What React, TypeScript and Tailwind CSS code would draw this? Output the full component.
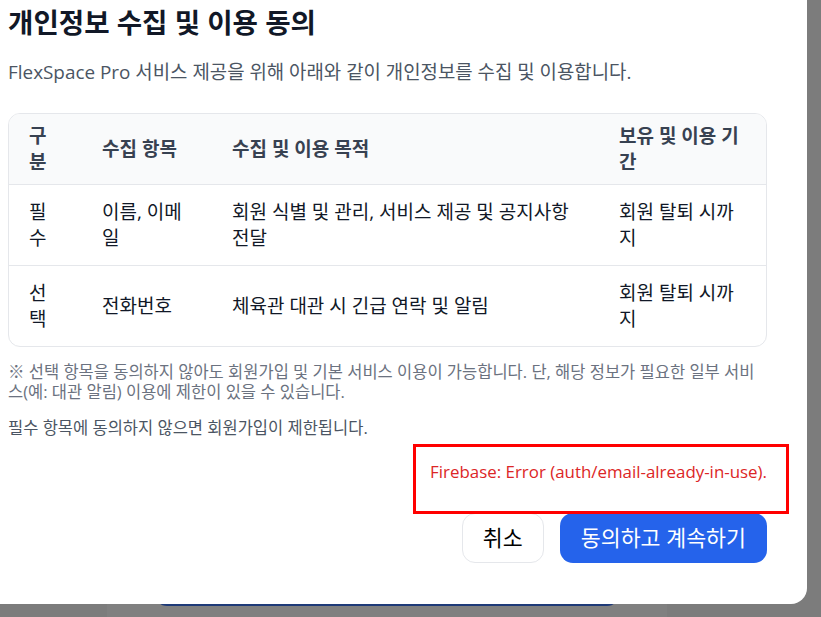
import React from "react";

const rows = [
  { kind: "필수", items: "이름, 이메일", purpose: "회원 식별 및 관리, 서비스 제공 및 공지사항 전달", period: "회원 탈퇴 시까지" },
  { kind: "선택", items: "전화번호", purpose: "체육관 대관 시 긴급 연락 및 알림", period: "회원 탈퇴 시까지" },
];

const ConsentTable = () => {
  return (
    <div className="mt-[28px] w-[759px] overflow-hidden rounded-xl border border-[#e5e7eb]">
      <table className="w-full table-fixed border-collapse text-left text-[19px] leading-[26px]">
        <colgroup>
          <col className="w-[73px]" />
          <col className="w-[130px]" />
          <col className="w-[387px]" />
          <col className="w-[167px]" />
        </colgroup>
        <thead>
          <tr className="border-b border-[#e5e7eb] bg-[#f9fafb] text-[#374151]">
            <th className="px-5 py-[9px] font-semibold">구분</th>
            <th className="px-5 py-[9px] font-semibold">수집 항목</th>
            <th className="px-5 py-[9px] font-semibold">수집 및 이용 목적</th>
            <th className="px-5 py-[9px] font-semibold">보유 및 이용 기간</th>
          </tr>
        </thead>
        <tbody className="text-[#111827]">
          {rows.map((r, i) => (
            <tr key={r.kind} className={i < rows.length - 1 ? "border-b border-[#e5e7eb]" : ""}>
              <td className="px-5 py-[14px]">{r.kind}</td>
              <td className="px-5 py-[14px]">{r.items}</td>
              <td className="px-5 py-[14px]">{r.purpose}</td>
              <td className="px-5 py-[14px]">{r.period}</td>
            </tr>
          ))}
        </tbody>
      </table>
    </div>
  );
};

const ConsentModal = () => {
  return (
    <div className="relative z-10 w-[807px] rounded-br-2xl bg-white pl-2 pr-10 pt-1 pb-[41px]">
      <h2 className="text-[27.6px] font-bold leading-[36px] text-[#111827]">개인정보 수집 및 이용 동의</h2>
      <p className="mt-[19px] text-[18.9px] leading-[26px] text-[#4b5563]">
        FlexSpace Pro 서비스 제공을 위해 아래와 같이 개인정보를 수집 및 이용합니다.
      </p>

      <ConsentTable />

      <p className="mt-[15px] w-[759px] text-[16.5px] leading-5 text-[#6b7280]">
        ※ 선택 항목을 동의하지 않아도 회원가입 및 기본 서비스 이용이 가능합니다. 단, 해당 정보가 필요한 일부 서비스(예: 대관 알림) 이용에 제한이 있을 수 있습니다.
      </p>
      <p className="mt-4 text-[16.5px] leading-5 text-[#4b5563]">필수 항목에 동의하지 않으면 회원가입이 제한됩니다.</p>

      <div className="relative mt-[23px] w-[759px] text-right text-[16.9px] leading-[22px] text-[#dc2626]">
        Firebase: Error (auth/email-already-in-use).
        <div className="pointer-events-none absolute left-[405px] top-[-17px] h-[70px] w-[376px] border-[3px] border-[#ff0000]" />
      </div>

      <div className="mt-[30px] flex w-[759px] justify-end gap-4">
        <button className="h-[50px] rounded-[13px] border border-[#e5e7eb] bg-white px-5 text-[21.7px] text-black">
          취소
        </button>
        <button className="h-[50px] rounded-[13px] bg-[#2563eb] px-[21px] text-[21.7px] text-white">
          동의하고 계속하기
        </button>
      </div>
    </div>
  );
};

export default function App() {
  return (
    <div
      className="relative h-[617px] w-[821px] overflow-hidden bg-[#7c7c7c]"
      style={{ fontFamily: '"Open Sans", "Noto Sans CJK KR", sans-serif' }}
    >
      {/* page behind the overlay */}
      <div className="absolute inset-0 flex pl-[107px]">
        <div className="relative w-[560px] bg-[#808080]">
          <div className="absolute left-[48px] top-[588px] h-[18px] w-[464px] rounded-b-xl bg-[#1e3a78]" />
        </div>
      </div>
      <ConsentModal />
    </div>
  );
}
